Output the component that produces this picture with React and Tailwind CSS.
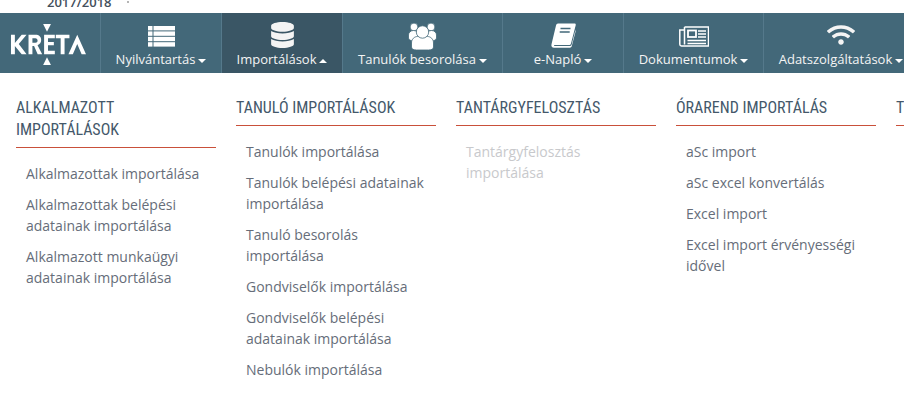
import React from 'react';
import { FaDatabase, FaWifi } from 'react-icons/fa';

const ListIcon = () => (
  <svg width="27" height="21" viewBox="0 0 27 21" fill="white" className="mt-[2px]">
    {[0, 5.4, 10.8, 16.2].map((y) => (
      <g key={y}>
        <rect x="0" y={y} width="4.5" height="4.4" />
        <rect x="5.500" y={y} width="21.500" height="4.4" />
      </g>
    ))}
  </svg>
);

const UsersIcon = () => (
  <svg width="29" height="27" viewBox="0 0 29 27" fill="white" stroke="#436879" strokeWidth="0.8" className="mt-[2px]">
    <circle cx="6" cy="4" r="3.900" />
    <circle cx="23" cy="4" r="3.900" />
    <path d="M0.500 12a5 4.500 0 0 1 10 0v3a5 3 0 0 1-10 0z" />
    <path d="M18.500 12a5 4.500 0 0 1 10 0v3a5 3 0 0 1-10 0z" />
    <path d="M3.500 20c0-4 3-6.500 6-6.500h10c3 0 6 2.500 6 6.500v4c0 2-2 3-5 3H8.500c-3 0-5-1-5-3z" />
    <circle cx="14.500" cy="9" r="6.200" />
  </svg>
);

const BookIcon = () => (
  <svg width="25" height="25" viewBox="0 0 25 25">
    <path d="M7 0.500h16.500c1 0 1.500.7 1.200 1.700L20 20.500c-.3 1-1 1.500-2 1.500H3.500C2.800 22 2.800 23 3.500 23h15.500c.8 0 1.300-.4 1.600-1.200l4-15.300v2L20.800 23c-.3 1-1 1.700-2 1.700H3C1 24.700 0 23.200.5 21.200L5 2.500C5.300 1.200 6 .5 7 .5z" fill="white" />
    <path d="M9.500 5.500h10M8.700 9h10" stroke="#436879" strokeWidth="1.500" fill="none" />
  </svg>
);

const NewsIcon = () => (
  <svg width="30" height="21" viewBox="0 0 30 21" fill="none" stroke="white" strokeWidth="1.500" className="mt-[2px]">
    <path d="M5.500 1h24v19H2.500C1.500 20 .8 19.300 .8 18.300V4h4.700M5.500 1v17.500" />
    <rect x="9" y="4.500" width="8" height="6.500" strokeWidth="1.800" />
    <path d="M19 5h8M19 8h8M19 11h8M8.500 14.500h18.500M8.500 17.500h18.500" />
  </svg>
);

const NAV = [
  { label: 'Nyilvántartás', icon: <ListIcon />, w: 'w-[121px]' },
  { label: 'Importálások', icon: <FaDatabase className="w-[23px] h-[26px]" />, w: 'w-[121px]', active: true },
  { label: 'Tanulók besorolása', icon: <UsersIcon />, w: 'w-[160px]' },
  { label: 'e-Napló', icon: <BookIcon />, w: 'w-[121px]' },
  { label: 'Dokumentumok', icon: <NewsIcon />, w: 'w-[140px]' },
  { label: 'Adatszolgáltatások', icon: <FaWifi className="text-[28px]" />, w: 'w-[153px] pl-[2px]' },
];

const COLUMNS = [
  {
    title: ['ALKALMAZOTT', 'IMPORTÁLÁSOK'],
    items: [['Alkalmazottak importálása'], ['Alkalmazottak belépési', 'adatainak importálása'], ['Alkalmazott munkaügyi', 'adatainak importálása']],
  },
  {
    title: ['TANULÓ IMPORTÁLÁSOK'],
    items: [
      ['Tanulók importálása'],
      ['Tanulók belépési adatainak', 'importálása'],
      ['Tanuló besorolás', 'importálása'],
      ['Gondviselők importálása'],
      ['Gondviselők belépési', 'adatainak importálása'],
      ['Nebulók importálása'],
    ],
  },
  {
    title: ['TANTÁRGYFELOSZTÁS'],
    disabled: true,
    items: [['Tantárgyfelosztás', 'importálása']],
  },
  {
    title: ['ÓRAREND IMPORTÁLÁS'],
    items: [['aSc import'], ['aSc excel konvertálás'], ['Excel import'], ['Excel import érvényességi', 'idővel']],
  },
  { title: ['TOVÁBBI'], items: [] },
];

const Logo = () => (
  <div className="w-[100px] shrink-0 flex items-center pl-[10px] pt-[2px]">
    <svg width="76" height="41" viewBox="0 0 78 42" preserveAspectRatio="none" fill="white">
      <path d="M34 0h8l-4 8z" />
      <path d="M34 42h8l-4-8z" />
      <path d="M1 11h4v8.500L12 11h5l-8 9.500L17 31h-5l-7-8.500V31H1z" />
      <path d="M19 11h7c4 0 6 2 6 5.500 0 2.700-1.400 4.500-3.700 5.200L33 31h-4.600l-3.700-8.500H23V31h-4zm4 3.500v4.700h3c1.500 0 2.300-.9 2.300-2.300s-.8-2.400-2.300-2.400z" />
      <path d="M35 11h11v3.500h-7v4h6v3.300h-6v5.700h7V31H35z" />
      <path d="M47 11h14v3.500h-5V31h-4V14.500h-5z" />
      <path d="M69 11l9 20h-4.500L69 20.500 64.500 31H60z" />
    </svg>
  </div>
);

const Caret = ({ up }) => (
  <span className={`inline-block w-0 h-0 ml-[3px] align-middle border-x-[4px] border-x-transparent ${up ? 'border-b-[4px] border-b-white' : 'border-t-[4px] border-t-white'}`} />
);

const NavItem = ({ label, icon, w, active }) => (
  <div className={`${w} shrink-0 h-full border-l border-[#55798b] flex flex-col items-center justify-end pb-[5px] text-[#f4f4f4] ${active ? 'bg-[#3a5665]' : ''}`}>
    <div className="h-[28px] mb-px flex items-center justify-center">{icon}</div>
    <span className="text-[13px] leading-[18px] whitespace-nowrap">
      {label}
      <Caret up={active} />
    </span>
  </div>
);

const Column = ({ title, items, disabled }) => (
  <div className="w-[200px] shrink-0">
    <div className="border-b border-[#c9503a] pb-[6px] font-['Roboto',sans-serif] text-[16px] leading-[21.75px] text-[#44586a] [font-stretch:75%]">
      {title.map((line) => (
        <div key={line} className="whitespace-nowrap">{line}</div>
      ))}
    </div>
    <ul className="mt-[15px] pl-[10px]">
      {items.map((lines) => (
        <li key={lines[0]} className={`mb-[10px] text-[14px] leading-[21px] ${disabled ? 'text-[#c8c9cc]' : 'text-[#666d79]'}`}>
          {lines.map((line) => (
            <div key={line} className="whitespace-nowrap">{line}</div>
          ))}
        </li>
      ))}
    </ul>
  </div>
);

export default function App() {
  return (
    <div className="w-[904px] h-[405px] overflow-hidden bg-white font-['Open_Sans',sans-serif]">
      <div className="h-[13px] overflow-hidden pl-[47px] flex">
        <div className="-mt-[7px] text-[13px] leading-[18px] font-semibold text-[#44505c]">2017/2018</div>
        <div className="ml-[15px] mt-px w-[2px] h-[2px] bg-[#b5b5b5]" />
      </div>
      <div className="h-[60px] bg-[#436879] flex overflow-hidden">
        <Logo />
        {NAV.map((item) => (
          <NavItem key={item.label} {...item} />
        ))}
      </div>
      <div className="flex gap-[20px] pl-[16px] pt-[24px]">
        {COLUMNS.map((col) => (
          <Column key={col.title[0]} {...col} />
        ))}
      </div>
    </div>
  );
}
